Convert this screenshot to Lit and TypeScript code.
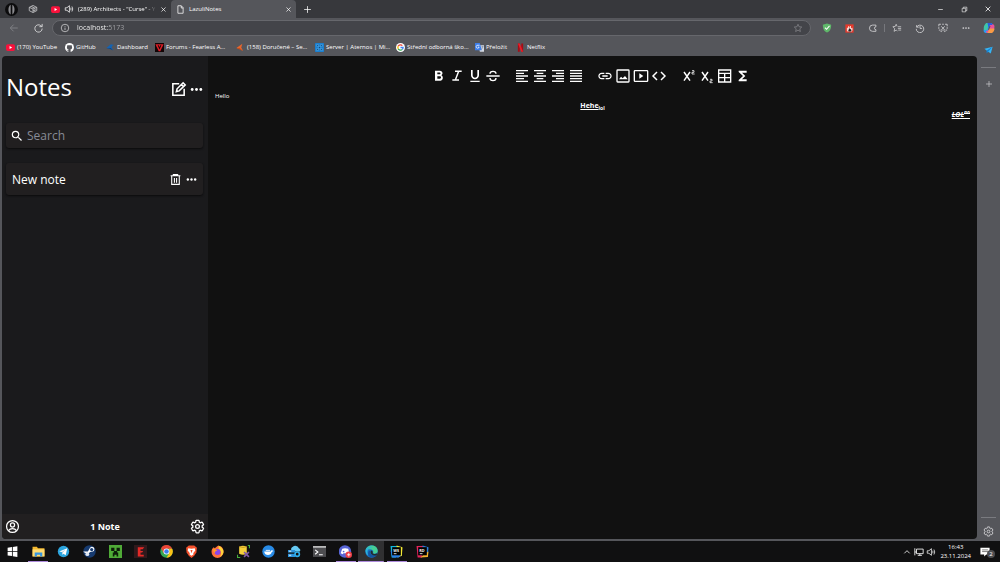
import { LitElement, html, svg, css, TemplateResult } from "lit";
import { customElement, property } from "lit/decorators.js";

type Glyph = TemplateResult;

const gearPath =
  "M19.43 12.98c.04-.32.07-.64.07-.98 0-.34-.03-.66-.07-.98l2.11-1.65c.19-.15.24-.42.12-.64l-2-3.46c-.09-.16-.26-.25-.44-.25-.06 0-.12.01-.17.03l-2.49 1c-.52-.4-1.08-.73-1.69-.98l-.38-2.65C14.46 2.18 14.25 2 14 2h-4c-.25 0-.46.18-.49.42l-.38 2.65c-.61.25-1.17.59-1.69.98l-2.49-1c-.06-.02-.12-.03-.18-.03-.17 0-.34.09-.43.25l-2 3.46c-.13.22-.07.49.12.64l2.11 1.65c-.04.32-.07.65-.07.98 0 .33.03.66.07.98l-2.11 1.65c-.19.15-.24.42-.12.64l2 3.46c.09.16.26.25.44.25.06 0 .12-.01.17-.03l2.49-1c.52.4 1.08.73 1.69.98l.38 2.65c.03.24.24.42.49.42h4c.25 0 .46-.18.49-.42l.38-2.65c.61-.25 1.17-.59 1.69-.98l2.49 1c.06.02.12.03.18.03.17 0 .34-.09.43-.25l2-3.46c.12-.22.07-.49-.12-.64l-2.11-1.65z";

const line = (d: string, w = 2): Glyph =>
  svg`<path d=${d} fill="none" stroke="currentColor" stroke-width=${w}/>`;
const fill = (d: string, c = "currentColor"): Glyph =>
  svg`<path d=${d} fill=${c} fill-rule="evenodd"/>`;

const glyphs: Record<string, Glyph> = {
  // Browser chrome
  profile: svg`<circle cx="12" cy="12" r="12" fill="#0c0c0d"/><path d="M10.500 3v18C5 18 5 6 10.500 3zM13.500 3v18C19 18 19 6 13.500 3z" fill="#8b8b8f"/><path d="M12 1v22" stroke="#0c0c0d" stroke-width="2"/>`,
  workspaces: line("M3 8l9-4.500 9 4.500v8l-9 4.500L3 16zM3 8l9 4 9-4M12 12v8M8 6l8.500 4M12 16h5v-4"),
  speaker: line("M3 9v6h4l6 5V4L7 9zM16 9q2 3 0 6M19 6q4 6 0 12", 1.8),
  page: line("M5 2h9l5 5v15H5zM14 2v6h5", 2),
  close: line("M5 5l14 14M19 5L5 19", 2.4),
  plus: line("M12 3v18M3 12h18", 2),
  minimize: line("M4 12h16", 2.2),
  restore: line("M4 8h12v12H4zM8 8V4h12v12h-4", 2),
  back: line("M21 12H4M11 4l-8 8 8 8", 1.8),
  reload: line("M20 12a8 8 0 1 1-3-6.300L20 8M20 2v6h-6", 2),
  info: line("M12 3a9 9 0 1 1 0 18a9 9 0 1 1 0-18M12 11v6M12 7v2", 1.8),
  star: line("M12 3l2.700 6 6.300.700-4.700 4.300 1.400 6.500-5.700-3.300-5.700 3.300 1.400-6.500L3 9.700 9.300 9z", 1.6),
  shield: svg`<path d="M12 1l10 3c0 9-2 15-10 19C4 19 2 13 2 4z" fill="#5fb86a"/><path d="M7 11l4 4 7-8" fill="none" stroke="#fff" stroke-width="2.500"/>`,
  blocker: svg`<rect x="1" y="1" width="22" height="22" fill="#e5392b"/><path d="M5 19V10h3V6h3v3h2V5h3v6l4-1v7l-4 4z" fill="#f6d5d0"/><path d="M10 20c-3-4 1-5 1-9 5 2 8 5 5 9z" fill="#222"/>`,
  extension: line("M19 9V5H11a7 7 0 1 0 0 15h8v-4a3.500 3.500 0 0 1 0-7z", 2),
  favorites: line("M12 8l-2-5-2 5-6 1 4.500 4L5 20l5-3 3 2M14 9h8M14 13h8M15 17h7", 1.8),
  history: line("M4 5v5h5M4 10a9 9 0 1 1-1 4M12 7v6h5", 2),
  capture: line("M2 8V3h5M10 3h4M17 3h5v5M22 10v4M2 10v4M2 17h4M22 17h-4M8 8l8 9M16 8l-8 9M6 20a2 2 0 1 0 3-3M18 20a2 2 0 1 1-3-3", 2),
  dots: svg`<circle cx="4" cy="12" r="2.600" fill="currentColor"/><circle cx="12" cy="12" r="2.600" fill="currentColor"/><circle cx="20" cy="12" r="2.600" fill="currentColor"/>`,
  copilot: svg`<path d="M7 2h9c2 0 3 2 3 4l-4 1-4 11c-1 3-2 4-4 4-5 0-7-4-5-9z" fill="#2a9df0"/><path d="M7 2h6L8 16H2C0 10 4 3 7 2z" fill="#3fc6a8"/><path d="M17 22H9c-2 0-3-2-3-4l4-1L14 7c1-3 2-3 4-3 5 0 6 5 4 10z" fill="#e8529a"/><path d="M17 22H9l4-9h10c0 4-3 9-6 9z" fill="#f99a45"/><path d="M9 2h7c2 0 3 2 3 4h-5l-3 6z" fill="#2d5be0"/><path d="M10 15l3-7h2l-3 8z" fill="#55565b"/>`,
  plane: svg`<path d="M1 7l22-5-5 18-7-5z" fill="#35b4f5"/><path d="M11 15L23 2 7 12v8z" fill="#1583d3"/>`,
  youtube: svg`<rect x="0" y="3" width="24" height="18" rx="5" fill="#f8123c"/><path d="M9.500 8v8l7-4z" fill="#fff"/>`,
  github: svg`<circle cx="12" cy="12" r="12" fill="#fff"/><path d="M9 24v-3.500c-3 .5-3.500-1.500-4.500-2.500 2-.5 2.500 1.500 4.500 1 0-.8.300-1.200.700-1.600C6 17 5 14.500 5 11.500c0-1.400.5-2.400 1.200-3.200-.2-1.200 0-2.300.3-3.300 1.300 0 2.300.6 3.200 1.200a10 10 0 0 1 4.600 0c.9-.6 1.900-1.200 3.200-1.200.3 1 .5 2.100.3 3.300.7.800 1.200 1.800 1.200 3.200 0 3-1 5.500-4.700 5.900.5.500.7 1.200.7 2.200V24z" fill="#55565b"/>`,
  wingBlue: svg`<path d="M1 13L13 3l8 2-4 2-2 5 5 7-8-4z" fill="#1463b3"/><path d="M1 13h12l6 7-9-5z" fill="#0d4687"/>`,
  wingOrange: svg`<path d="M1 13L17 2l-3 10 5 9-8-5z" fill="#e8662c"/><path d="M1 13h9l8 8z" fill="#c44e1c"/>`,
  forum: svg`<rect width="24" height="24" fill="#120506"/><path d="M1 3h22l-9 19h-4z" fill="#dc1d27"/><path d="M7 6l5 11 5-11h-3l-2 5-2-5z" fill="#160506"/>`,
  server: svg`<rect width="24" height="24" rx="2" fill="#1a7fd0"/><path d="M4 4h5v5H4zM15 4h5v5h-5zM4 15h5v5H4zM15 15h5v5h-5zM9 9h6v6H9z" fill="#114a83" stroke="#52b0ee" stroke-width="1.500"/>`,
  google: svg`<circle cx="12" cy="12" r="12" fill="#fff"/><g fill="none" stroke-width="3.500"><path d="M17 7A7 7 0 0 0 6 8.500" stroke="#ea4335"/><path d="M6 8.500a7 7 0 0 0 0 7" stroke="#fbbc05"/><path d="M6 15.500A7 7 0 0 0 17 17" stroke="#34a853"/><path d="M17 17a7 7 0 0 0 2-5h-7" stroke="#4285f4"/></g>`,
  translate: svg`<path d="M9 6h15v17H13z" fill="#d5d9e0"/><path d="M0 0h13l5 19H0z" fill="#3d7eea"/><path d="M12 6H8a4 4 0 1 0 3 5H8" fill="none" stroke="#fff" stroke-width="2"/><path d="M17 10h6M20 9c0 5-2 7-4 9" stroke="#65738a" stroke-width="1.500" fill="none"/>`,
  netflix: svg`<path d="M5 1h5v22H5zM14 1h5v22h-5z" fill="#a80b14"/><path d="M5 1h5l9 22h-5z" fill="#ed1c27"/>`,
  // Notes application
  edit: line("M13 4H4v16h16v-9M9 15l1-4 8.500-8.500 3 3L13 14zM16 5l3 3", 2.2),
  search: fill("M15.500 14h-.79l-.28-.27A6.471 6.471 0 0 0 16 9.500 6.500 6.500 0 1 0 9.500 16c1.610 0 3.090-.59 4.230-1.570l.27.28v.79l5 4.990L20.490 19l-4.990-5zm-6 0C7.010 14 5 11.990 5 9.500S7.010 5 9.500 5 14 7.010 14 9.500 11.990 14 9.500 14z"),
  trash: line("M3 5h18M8 5V3h8v2M5 5v16h14V5M10 9v9M14 9v9"),
  account: svg`<circle cx="12" cy="12" r="9.500" fill="none" stroke="currentColor" stroke-width="2"/><circle cx="12" cy="9.500" r="3.300" fill="none" stroke="currentColor" stroke-width="2"/><path d="M5.500 18.500c3-4 10-4 13 0" fill="none" stroke="currentColor" stroke-width="2"/>`,
  gear: svg`<path d=${gearPath} fill="none" stroke="currentColor" stroke-width="2"/><circle cx="12" cy="12" r="3" fill="none" stroke="currentColor" stroke-width="2"/>`,
  bold: fill("M15.600 10.790c.97-.67 1.650-1.770 1.650-2.790 0-2.260-1.750-4-4-4H6v15h8.040c2.090 0 3.710-1.700 3.710-4.290 0-1.520-.86-3.320-2.150-3.920zM9.500 6.800h3.500c.83 0 1.200.4 1.200 1.200s-.37 1.500-1.200 1.500H9.500V6.800zm4 9.200h-4v-3.500h4c.83 0 1.500.67 1.500 1.700s-.67 1.800-1.500 1.800z"),
  italic: line("M9 5h10M5 18h10M14.500 5l-5 13", 2.2),
  underline: fill("M12 17c3.310 0 6-2.690 6-6V3h-2.500v8c0 1.930-1.570 3.500-3.500 3.500S8.500 12.930 8.500 11V3H6v8c0 3.310 2.690 6 6 6zm-7 2v2h14v-2H5z"),
  strike: line("M2 12h20M16.500 8.500C16.500 6 14.500 5 12 5S7.500 6 7.500 8.500M7.500 15c0 3 2 4 4.500 4s4.500-1 4.500-4"),
  left: line("M3 4h18M3 8h12M3 12h18M3 16h12M3 20h18"),
  center: line("M3 4h18M7 8h10M3 12h18M7 16h10M3 20h18"),
  right: line("M3 4h18M9 8h12M3 12h18M9 16h12M3 20h18"),
  justify: line("M3 4h18M3 8h18M3 12h18M3 16h18M3 20h18"),
  link: fill("M3.900 12c0-1.710 1.390-3.100 3.100-3.100h4V7H7c-2.760 0-5 2.240-5 5s2.240 5 5 5h4v-1.900H7c-1.710 0-3.100-1.390-3.100-3.100zM8 13h8v-2H8v2zm9-6h-4v1.900h4c1.710 0 3.100 1.390 3.100 3.100s-1.390 3.100-3.100 3.100h-4V17h4c2.760 0 5-2.240 5-5s-2.240-5-5-5z"),
  image: svg`<rect x="3" y="3" width="18" height="18" rx="1" fill="none" stroke="currentColor" stroke-width="2"/><path d="M6 17l3-4 2.500 2.500L15 12l4 5z" fill="currentColor"/>`,
  video: svg`<rect x="2" y="4" width="20" height="16" rx="1" fill="none" stroke="currentColor" stroke-width="2"/><path d="M9.500 8v8l6-4z" fill="currentColor"/>`,
  code: line("M9 6l-6 6 6 6M15 6l6 6-6 6", 2.2),
  sup: svg`${line("M6 6l9 13M15 6L6 19", 2.2)}${line("M18 4h3v2.500h-3V9h4", 1.2)}`,
  sub: svg`${line("M6 6l9 13M15 6L6 19", 2.2)}${line("M18 17h3v2.500h-3V22h4", 1.2)}`,
  table: line("M4 3h18v18H4zM4 8h18M4 14.500h18M13 8v13"),
  sigma: fill("M19 4H7v2l6.500 6L7 18v2h12v-3h-7l5-5-5-5h7z"),
  // Taskbar
  windows: svg`<path d="M3 5l8-1.200V11.500H3zM12.500 3.600L21 2.500v9h-8.500zM3 13h8v7.500L3 19.300zM12.500 13H21v9l-8.500-1.200z" fill="#fff"/>`,
  folder: svg`<path d="M1 3h8l2 3h12v15H1z" fill="#f5b92f"/><path d="M1 8h22v13H1z" fill="#ffdc73"/><path d="M5 14h14v7h-4v-3H9v3H5z" fill="#3595df"/>`,
  telegram: svg`<circle cx="12" cy="12" r="10.500" fill="#2ba4dd"/><path d="M4 12l15-6-3 13-4-3-2 2-1-5z" fill="#fff"/><path d="M9 13l7-5-5 6-1 4z" fill="#a8cbe0"/>`,
  steam: svg`<circle cx="12" cy="12" r="11.500" fill="#173b70"/><path d="M1 13l8 4 4-4 5-1a4.500 4.500 0 1 0-6-5l-3 5H1z" fill="#fff"/><circle cx="16" cy="8.500" r="3" fill="#173b70"/><circle cx="8" cy="17" r="3.500" fill="#dfe7f3"/>`,
  creeper: svg`<rect width="24" height="24" fill="#4faa37"/><path d="M4 5h6v6H4zM14 5h6v6h-6zM9 11h6v3h2v7h-3v-3h-4v3H7v-7h2z" fill="#0d1d09"/>`,
  redApp: svg`<rect width="24" height="24" fill="#30191c"/><path d="M7 4h12l-3 4h-4v3h5l-2 3h-3v4h6v3H7z" fill="#e42a27"/>`,
  chrome: svg`<circle cx="12" cy="12" r="11.500" fill="#34a853"/><path d="M2 6a11.500 11.500 0 0 1 20.500 1H12l-5 8z" fill="#ea4335"/><path d="M22.500 7A11.500 11.500 0 0 1 12 23.500L17 15V7z" fill="#fbc116"/><circle cx="12" cy="12" r="5.500" fill="#fff"/><circle cx="12" cy="12" r="4.200" fill="#3b7ded"/>`,
  brave: svg`<path d="M7 1h10l5 4-1 9-4 6-5 4-5-4-4-6-1-9z" fill="#f4512c"/><path d="M6 6l6 1 6-1 1 4-4 5 1 2-4 3-4-3 1-2-4-5z" fill="#fff"/><path d="M10 9l2 6 2-6z" fill="#f4512c"/>`,
  firefox: svg`<path d="M12 2c5-2 12 4 11 11a11 11 0 0 1-22 0c0-4 1-7 4-9l2 2z" fill="#ff7139"/><path d="M14 1c5 3 10 7 9 13-1 4-4 7-7 8 4-5 4-10-2-15z" fill="#ffd43a"/><circle cx="12" cy="13" r="5.500" fill="#8a46e8"/><path d="M3 8c4-2 6 0 9 2-3 0-4 2-6 5z" fill="#ff9b29"/>`,
  database: svg`<path d="M4 3q7-3 14 0v13q-7 4-14 0z" fill="#f5cf3b"/><path d="M4 3q7 3 14 0" stroke="#ba8b15" stroke-width="1.500" fill="none"/><path d="M1 18v5h5M20 1h3v5" stroke="#48ad3c" stroke-width="2" fill="none"/><path d="M13 13l9 9M22 13l-9 9" stroke="#825ba9" stroke-width="3"/>`,
  docker: svg`<circle cx="12" cy="12" r="11.500" fill="#288ae5"/><path d="M4 12h12l2-3 3 2-3 2c-1 7-13 8-14-1z" fill="#fff"/><path d="M7 9h8v2H7z" fill="#d8ebfb"/>`,
  cloud: svg`<path d="M7 11a5 5 0 0 1 2-8 7 7 0 0 1 11 3 4 4 0 0 1 2 6H9z" fill="#65c8f2"/><path d="M0 9h13v5H0zM0 16h13v6H0z" fill="#2c93dc"/><path d="M2 11.500h4M2 19h4" stroke="#fff" stroke-width="1.500"/><circle cx="17" cy="17" r="4" fill="none" stroke="#2fb0ee" stroke-width="3"/>`,
  terminal: svg`<rect x="0" y="2" width="24" height="20" fill="#4d4d50"/><path d="M0 2h24v3H0z" fill="#c5c5c7"/><path d="M4 9l5 4-5 4M11 18h7" fill="none" stroke="#fff" stroke-width="2"/>`,
  discord: svg`<circle cx="11" cy="12" r="11.500" fill="#5865d6"/><path d="M6 7q5-2 11 0l2 8-4 2-1-2H8l-1 2-4-2z" fill="#fff"/><circle cx="8.500" cy="12" r="1.600" fill="#5865d6"/><circle cx="18" cy="18" r="6" fill="#ee4048"/><path d="M15 18h6M18 15v6" stroke="#fff" stroke-width="1.500"/>`,
  edge: svg`<circle cx="12" cy="12" r="11.500" fill="#1673c5"/><path d="M1 10C3-2 23-2 23.500 11c0 5-6 6-9 4 3-5-3-10-13-5z" fill="#45cf96"/><path d="M1 10C3 3 11 2 14 6c-7-2-12 3-8 13-4-2-5-6-5-9z" fill="#2cb5dd"/><path d="M10 10c-3 6 3 11 12 8-5 8-18 6-16-4 0-2 2-4 4-4z" fill="#1555a2"/><path d="M11 10c3 0 4 3 3 5 2 2 6 2 8 0v4c-7 1-14-2-11-9z" fill="#232a2d"/>`,
  webstorm: svg`<path d="M1 2h14l-4 21H3z" fill="#12b7dc"/><path d="M12 1l11 3-1 16-8 3z" fill="#f4ea35"/><path d="M1 10l3 13h12l4-4z" fill="#2a7fe8"/><rect x="4" y="4" width="16" height="15" fill="#000"/><text x="6" y="12" font-size="7" font-weight="700" fill="#fff">WS</text><path d="M7 16h5" stroke="#fff" stroke-width="1.500"/>`,
  rider: svg`<path d="M1 2h14l-4 21H3z" fill="#e4255b"/><path d="M12 1l11 3-1 16-8-5z" fill="#2a80dc"/><path d="M8 23l14-1 1-10-9 6z" fill="#f3b02e"/><rect x="4" y="4" width="16" height="15" fill="#000"/><text x="6" y="12" font-size="7" font-weight="700" fill="#fff">RD</text><path d="M7 16h5" stroke="#fff" stroke-width="1.500"/>`,
  chevronUp: line("M4 16l8-8 8 8", 2.4),
  network: line("M6 5h16v11H6zM14 16v4M9 20h10M2 3v9h4M2 12v8", 2),
  message: svg`<path d="M1 2h22v16h-8l-5 5v-5H1z" fill="#fff"/><path d="M5 7h14M5 11h14" stroke="#333" stroke-width="1.500"/>`,
};

const bookmarks = [
  ["youtube", "(170) YouTube"],
  ["github", "GitHub"],
  ["wingBlue", "Dashboard"],
  ["forum", "Forums - Fearless A…"],
  ["wingOrange", "(158) Doručené – Se…"],
  ["server", "Server | Aternos | Mi…"],
  ["google", "Střední odborná ško…"],
  ["translate", "Přeložit"],
  ["netflix", "Netflix"],
];

const tools = [
  [["bold", "Bold"], ["italic", "Italic"], ["underline", "Underline"], ["strike", "Strikethrough"]],
  [["left", "Align left"], ["center", "Align center"], ["right", "Align right"], ["justify", "Justify"]],
  [["link", "Link"], ["image", "Image"], ["video", "Video"], ["code", "Code"]],
  [["sup", "Superscript"], ["sub", "Subscript"], ["table", "Table"], ["sigma", "Formula"]],
];

const apps = [
  ["windows", "Start", ""],
  ["folder", "File Explorer", "open"],
  ["telegram", "Telegram", ""],
  ["steam", "Steam", ""],
  ["creeper", "Minecraft", ""],
  ["redApp", "Launcher", ""],
  ["chrome", "Chrome", ""],
  ["brave", "Brave", ""],
  ["firefox", "Firefox", ""],
  ["database", "Database tools", ""],
  ["docker", "Docker", ""],
  ["cloud", "Cloud storage", ""],
  ["terminal", "Terminal", ""],
  ["discord", "Discord", "open"],
  ["edge", "Edge", "open active"],
  ["webstorm", "WebStorm", "open"],
  ["rider", "Rider", ""],
];

const shared = css`
  * { box-sizing: border-box; }
  button {
    display: flex; align-items: center; justify-content: center;
    padding: 0; border: 0; background: none; color: inherit; font: inherit; flex: none;
  }
  a { color: inherit; text-decoration: none; }
  input { min-width: 0; padding: 0; border: 0; outline: 0; background: none; font: inherit; color: inherit; }
`;

@customElement("ui-icon")
class UiIcon extends LitElement {
  @property() name = "";
  @property({ type: Number }) size = 10;
  static styles = css`
    :host { display: inline-flex; flex: none; }
    svg { display: block; }
  `;
  render() {
    return html`<svg width=${this.size} height=${this.size} viewBox="0 0 24 24" aria-hidden="true">${glyphs[this.name]}</svg>`;
  }
}

const iconButton = (name: string, label: string, size = 10, cls = "") =>
  html`<button class=${cls} aria-label=${label}><ui-icon name=${name} size=${size}></ui-icon></button>`;

@customElement("browser-chrome")
class BrowserChrome extends LitElement {
  static styles = [shared, css`
    :host { display: block; font-size: 6px; line-height: 10px; color: #fff; }
    .titlebar { display: flex; height: 18px; background: #37383c; }
    .corner { display: flex; width: 46px; }
    .corner button { width: 23px; }
    .corner button:last-child { width: 19px; color: #c4c4c7; }
    .tab { display: flex; align-items: center; gap: 4px; width: 125px; padding: 0 4px 0 5px; }
    .tab.active { background: #55565b; border-radius: 4px 4px 0 0; }
    .name { flex: 1; white-space: nowrap; }
    .fade { mask-image: linear-gradient(90deg, #000 88%, transparent); }
    .new { width: 22px; }
    .window { display: flex; margin-left: auto; }
    .window button { width: 24px; }
    .toolbar { display: flex; align-items: center; height: 20px; background: #55565b; color: #d5d5d7; }
    .nav { display: flex; padding: 0 2px; }
    .nav button { width: 24px; }
    .address {
      display: flex; align-items: center; flex: 1; gap: 7px; height: 16px; padding: 0 7px;
      border: 1px solid #66676c; border-radius: 8px; background: #434449; font-size: 7px;
    }
    .address input {
      flex: 1; height: 10px; color: #fff; background: linear-gradient(90deg, #fff 31px, #a5a6aa 31px);
      background-clip: text; -webkit-background-clip: text; -webkit-text-fill-color: transparent;
    }
    button.dim { color: #8c8d91; }
    .actions { display: flex; align-items: center; padding-left: 4px; }
    .actions button { width: 23px; }
    .rule { width: 1px; height: 8px; background: #77787d; }
    .bookmarks {
      display: grid; grid-template-columns: 59px 41px 49px 81px 79px 81px 79px 41px 41px;
      align-items: center; height: 18px; padding-left: 6px; background: #55565b;
    }
    .bookmarks a { display: flex; align-items: center; gap: 2px; white-space: nowrap; }
  `];
  render() {
    return html`
      <div class="titlebar">
        <div class="corner">${iconButton("profile", "Profile", 13)}${iconButton("workspaces", "Workspaces")}</div>
        <div class="tab">
          <ui-icon name="youtube" size="9"></ui-icon><ui-icon name="speaker" size="10"></ui-icon>
          <span class="name fade">(289) Architects - "Curse" - Y</span>
          ${iconButton("close", "Close tab", 7)}
        </div>
        <div class="tab active">
          <ui-icon name="page" size="9"></ui-icon>
          <span class="name">LazuliNotes</span>
          ${iconButton("close", "Close tab", 7)}
        </div>
        ${iconButton("plus", "New tab", 9, "new")}
        <div class="window">
          ${iconButton("minimize", "Minimize", 7)}${iconButton("restore", "Restore", 7)}${iconButton("close", "Close", 8)}
        </div>
      </div>
      <div class="toolbar">
        <div class="nav">${iconButton("back", "Back", 10, "dim")}${iconButton("reload", "Reload", 11)}</div>
        <div class="address">
          <ui-icon name="info" size="10"></ui-icon>
          <input type="text" aria-label="Address" .value=${"localhost:5173"} />
          ${iconButton("star", "Add to favorites", 10, "dim")}
        </div>
        <div class="actions">
          ${iconButton("shield", "Shield")}${iconButton("blocker", "Blocker", 9)}${iconButton("extension", "Extensions")}
          <span class="rule"></span>
          ${iconButton("favorites", "Favorites")}${iconButton("history", "History")}${iconButton("capture", "Screenshot")}
          ${iconButton("dots", "More", 8)}${iconButton("copilot", "Copilot", 12)}
        </div>
      </div>
      <nav class="bookmarks" aria-label="Bookmarks">
        ${bookmarks.map(([i, t]) => html`<a href="#"><ui-icon name=${i} size="9"></ui-icon>${t}</a>`)}
      </nav>`;
  }
}

@customElement("notes-sidebar")
class NotesSidebar extends LitElement {
  static styles = [shared, css`
    :host { display: flex; flex-direction: column; width: 206px; flex: none; background: #1a1a1c; color: #fff; }
    .head { display: flex; align-items: center; padding: 12px 5px 0 4px; }
    h1 { flex: 1; margin: 0; font-size: 24px; line-height: 38px; font-weight: 400; }
    .head div { display: flex; gap: 3px; padding-top: 4px; }
    .card { display: flex; align-items: center; margin: 0 5px 0 4px; border-radius: 3px; background: #211f20; box-shadow: 0 1px 2px #0b0b0c; font-size: 12px; }
    .search { gap: 3px; height: 25px; margin-top: 17px; padding: 0 4px; }
    .search input { flex: 1; line-height: 18px; }
    .search input::placeholder { color: #878b96; opacity: 1; }
    .note { gap: 4px; height: 32px; margin-top: 15px; padding: 0 6px; }
    .note span { flex: 1; }
    .foot { display: flex; align-items: center; justify-content: space-between; height: 25px; margin-top: auto; padding: 0 3px; background: #211f20; font-size: 9px; font-weight: 700; }
  `];
  render() {
    return html`
      <div class="head">
        <h1>Notes</h1>
        <div>${iconButton("edit", "New note", 17)}${iconButton("dots", "More", 13)}</div>
      </div>
      <label class="card search">
        <ui-icon name="search" size="14"></ui-icon>
        <input type="text" placeholder="Search" aria-label="Search" />
      </label>
      <div class="card note"><span>New note</span>${iconButton("trash", "Delete", 13)}${iconButton("dots", "More", 11)}</div>
      <div class="foot">${iconButton("account", "Account", 15)}<span>1 Note</span>${iconButton("gear", "Settings", 15)}</div>`;
  }
}

@customElement("note-editor")
class NoteEditor extends LitElement {
  static styles = [shared, css`
    :host { display: block; flex: 1; min-width: 0; padding: 12px 7px 0; background: #111; color: #fff; }
    .tools { display: flex; justify-content: center; gap: 11px; padding-right: 4px; }
    .group { display: flex; }
    .group button { width: 18px; height: 16px; }
    .text { padding-top: 7px; font-size: 7px; line-height: 9px; }
    p { margin: 0; }
    .first { font-size: 6px; line-height: 10px; }
    .mid { text-align: center; font-weight: 700; text-decoration: underline; }
    .end { text-align: right; font-weight: 700; font-style: italic; text-decoration: underline line-through; }
    sub, sup { font-size: 5px; line-height: 0; }
  `];
  render() {
    return html`
      <div class="tools" role="toolbar">
        ${tools.map((g) => html`<div class="group">${g.map(([i, l]) => iconButton(i, l, 16))}</div>`)}
      </div>
      <div class="text">
        <p class="first">Hello</p>
        <p class="mid">Hehe<sub>lol</sub></p>
        <p class="end">LOL<sup>no</sup></p>
      </div>`;
  }
}

@customElement("edge-rail")
class EdgeRail extends LitElement {
  static styles = [shared, css`
    :host { display: flex; flex-direction: column; align-items: center; width: 23px; flex: none; color: #d0d0d3; }
    button { width: 20px; height: 20px; }
    .rule { width: 15px; height: 1px; background: #7a7b80; }
    .first { margin: 7px 0 6px; }
    .end { margin: auto 0 3px; }
    .lift { margin-top: -16px; }
  `];
  render() {
    return html`
      ${iconButton("plane", "Telegram", 9, "lift")}
      <span class="rule first"></span>
      ${iconButton("plus", "Add", 8)}
      <span class="rule end"></span>
      ${iconButton("gear", "Settings", 11)}`;
  }
}

@customElement("task-bar")
class TaskBar extends LitElement {
  static styles = [shared, css`
    :host { display: flex; height: 21px; flex: none; background: #101011; color: #fff; font-size: 6px; line-height: 9px; }
    .apps { display: flex; width: 435px; }
    .apps button { flex: 1; }
    .open { background: linear-gradient(#ae8bdc, #ae8bdc) center bottom / 20px 1px no-repeat; }
    .active { background-color: #303032; background-size: 100% 1px; }
    .tray { display: flex; align-items: center; margin-left: auto; }
    .tray button { width: 12px; }
    .clock { padding: 0 4px 0 3px; text-align: center; }
    .tray .inbox { position: relative; width: 20px; margin-right: 5px; }
    .badge { position: absolute; right: 0; top: 3px; width: 8px; height: 8px; border-radius: 4px; background: #4d4d50; font-size: 6px; line-height: 8px; }
  `];
  render() {
    return html`
      <div class="apps">
        ${apps.map(([i, l, c]) => iconButton(i, l, 13, c))}
      </div>
      <div class="tray">
        ${iconButton("chevronUp", "Hidden icons", 8)}${iconButton("network", "Network", 10)}${iconButton("speaker", "Volume", 10)}
        <time class="clock">16:43<br />23.11.2024</time>
        <button class="inbox" aria-label="2 notifications"><ui-icon name="message" size="10"></ui-icon><span class="badge">2</span></button>
      </div>`;
  }
}

@customElement("app-root")
class AppRoot extends LitElement {
  static styles = css`
    :host {
      display: flex; flex-direction: column; height: 100vh; overflow: hidden; background: #55565b;
      font-family: "Open Sans", "Noto Sans", sans-serif;
    }
    .body { display: flex; flex: 1; min-height: 0; }
    .view { display: flex; flex: 1; min-width: 0; margin: 0 0 2px 2px; border-radius: 4px; overflow: hidden; }
  `;
  render() {
    return html`
      <browser-chrome></browser-chrome>
      <main class="body">
        <div class="view"><notes-sidebar></notes-sidebar><note-editor></note-editor></div>
        <edge-rail></edge-rail>
      </main>
      <task-bar></task-bar>`;
  }
}
